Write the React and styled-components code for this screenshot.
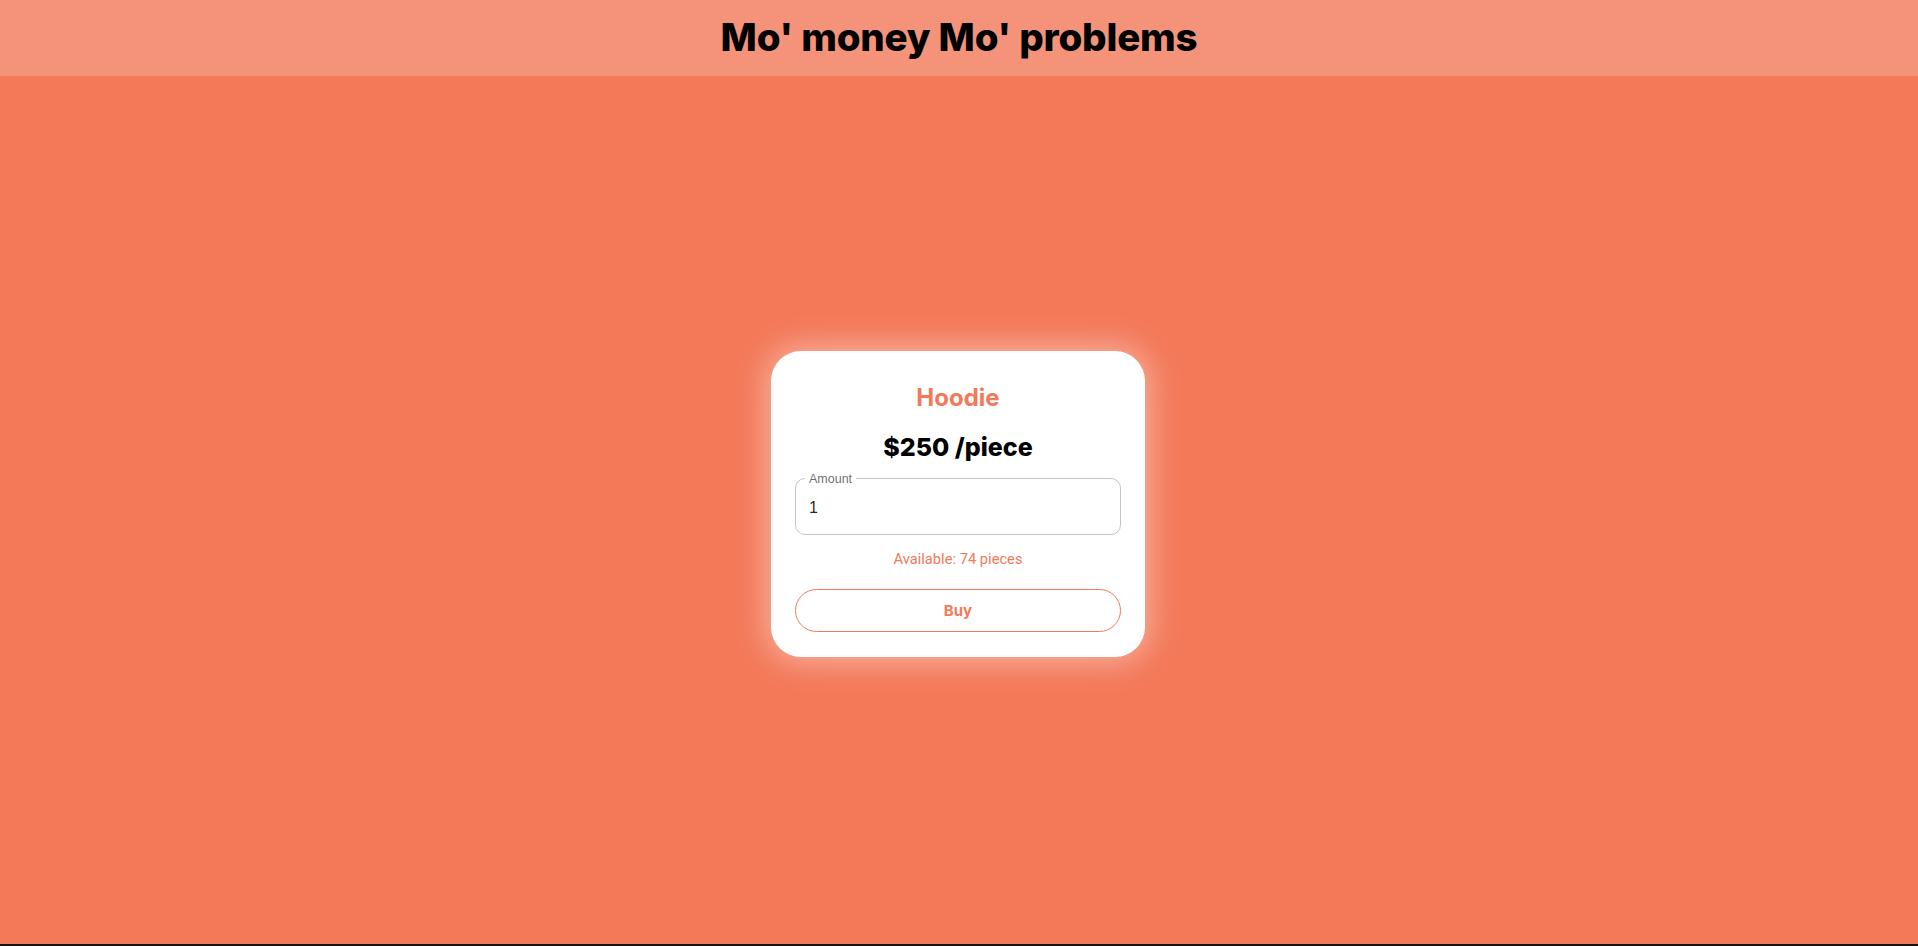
import React from "react";
import styled, { createGlobalStyle } from "styled-components";

const GlobalStyle = createGlobalStyle`
  * {
    box-sizing: border-box;
  }
  html, body {
    margin: 0;
    padding: 0;
    background: #141414;
  }
  body {
    font-family: "Inter", "Roboto", sans-serif;
  }
`;

const Page = styled.div`
  height: 944px;
  display: flex;
  flex-direction: column;
  background: #f37959;
`;

const Header = styled.header`
  height: 76px;
  flex-shrink: 0;
  display: flex;
  align-items: center;
  justify-content: center;
  background: rgba(255, 255, 255, 0.2);
`;

const Title = styled.h1`
  margin: 0;
  padding-bottom: 3px;
  font-family: "Inter", sans-serif;
  font-size: 38.5px;
  font-weight: 800;
  letter-spacing: -0.2px;
  color: #000;
`;

const Main = styled.main`
  flex: 1;
  display: flex;
  align-items: center;
  justify-content: center;
  padding-bottom: 13px;
  padding-right: 2px;
`;

const Card = styled.section`
  width: 374px;
  padding: 32px 24px 25px;
  display: flex;
  flex-direction: column;
  align-items: stretch;
  background: #fff;
  border-radius: 30px;
  box-shadow: 0 0 32px 4px rgba(255, 255, 255, 0.45);
`;

const Name = styled.h2`
  margin: 0;
  text-align: center;
  font-size: 24px;
  line-height: 30px;
  font-weight: 700;
  color: #f37959;
`;

const Price = styled.h2`
  margin: 19px 0 11px;
  text-align: center;
  font-size: 25px;
  line-height: 30px;
  font-weight: 800;
  color: #000;
`;

const Field = styled.fieldset`
  margin: 0;
  padding: 0 13px;
  border: 1px solid rgba(0, 0, 0, 0.23);
  border-radius: 10px;
  min-width: 0;
`;

const Legend = styled.legend`
  padding: 0 4px;
  margin-left: -4px;
  font-family: "Liberation Sans", Arial, sans-serif;
  font-size: 12.5px;
  line-height: 12px;
  color: rgba(0, 0, 0, 0.6);
`;

const Input = styled.input`
  display: block;
  width: 100%;
  border: none;
  outline: none;
  padding: 15px 0 18px;
  height: 49px;
  font-family: "Liberation Sans", Arial, sans-serif;
  font-size: 16px;
  line-height: 16px;
  color: rgba(0, 0, 0, 0.87);
  background: transparent;
`;

const Stock = styled.p`
  margin: 14px 0 20px;
  text-align: center;
  font-family: "Roboto", sans-serif;
  font-size: 14.7px;
  line-height: 20px;
  color: #f37959;
`;

const BuyButton = styled.button`
  height: 43px;
  border: 1px solid #f37959;
  border-radius: 22px;
  background: #fff;
  color: #f37959;
  font-family: "Inter", sans-serif;
  font-size: 15px;
  font-weight: 700;
  cursor: pointer;
`;

const App = () => {
  const [amount, setAmount] = React.useState("1");
  return (
    <>
      <GlobalStyle />
      <Page>
        <Header>
          <Title>Mo' money Mo' problems</Title>
        </Header>
        <Main>
          <Card>
            <Name>Hoodie</Name>
            <Price>$250 /piece</Price>
            <Field>
              <Legend>Amount</Legend>
              <Input
                type="text"
                value={amount}
                onChange={(e) => setAmount(e.target.value)}
              />
            </Field>
            <Stock>Available: 74 pieces</Stock>
            <BuyButton>Buy</BuyButton>
          </Card>
        </Main>
      </Page>
    </>
  );
};

export default App;
